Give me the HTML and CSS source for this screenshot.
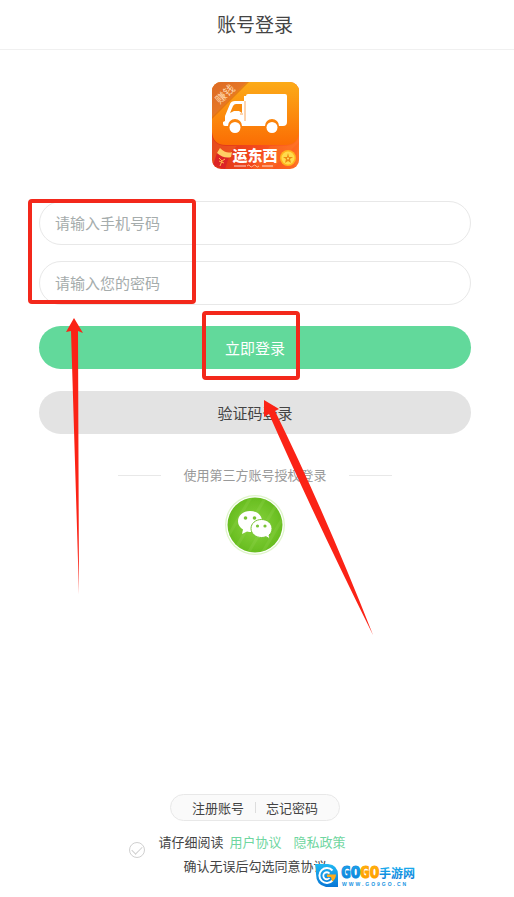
FILE: index.html
```html
<!DOCTYPE html>
<html lang="zh-CN">
<head>
<meta charset="utf-8">
<meta name="viewport" content="width=device-width, initial-scale=1">
<title>账号登录</title>
<link rel="stylesheet" href="styles.css">
</head>
<body>
<div class="page">
  <header class="topbar"><h1>账号登录</h1></header>

  <main class="content">
    <svg class="logo" viewBox="0 0 87 87" role="img" aria-label="运东西">
      <defs>
        <linearGradient id="sky" x1="0" y1="0" x2="0" y2="1">
          <stop offset="0" stop-color="#fcab18"/><stop offset="1" stop-color="#fb6d04"/>
        </linearGradient>
        <linearGradient id="ribbon" x1="0" y1="0" x2="1" y2="1">
          <stop offset="0" stop-color="#dc6a25"/><stop offset="1" stop-color="#ef8327"/>
        </linearGradient>
        <linearGradient id="base" x1="0" y1="0" x2="1" y2="0">
          <stop offset="0" stop-color="#dc3418"/><stop offset=".5" stop-color="#f4481c"/><stop offset="1" stop-color="#ff6d21"/>
        </linearGradient>
        <clipPath id="tile"><rect width="87" height="87" rx="9"/></clipPath>
      </defs>
      <g clip-path="url(#tile)">
        <rect width="87" height="87" fill="url(#base)"/>
        <path d="M0 53Q2 64 15 64H72Q85 64 87 53V87H82L87 60 60 87H40L58 64H25L0 87Z" fill="#ff8a2b" opacity=".28"/>
        <path d="M0 0H87V50Q86 63 73 63H14Q1 63 0 50Z" fill="url(#sky)"/>
        <path d="M0 0H35L0 35Z" fill="url(#ribbon)"/>
        <path d="M35 0L0 35V37L37 0Z" fill="#c95413" opacity=".45"/>
        <path d="M34 14Q34 12 36 12H73Q75 12 75 14V40Q75 44 71 44H67A7 7 0 0 0 53 44H30A7 7 0 0 0 16 44H13Q11 44 11 42V40L13 39V34L18 22Q19 19 23 19H32V14Z" fill="#fff"/>
        <path d="M18 31L21 24Q22 22 24 22H30V31L27 29H22Z" fill="#f98a0b"/>
        <path d="M33 19V39M31 32H28" fill="none" stroke="#fca75a"/>
        <circle cx="23" cy="45.500" r="5.500" fill="#fff"/>
        <circle cx="60" cy="45.500" r="5.500" fill="#fff"/>
        <path d="M5 71L17 75 13 87 1 83Z" fill="#dc2426"/>
        <path d="M8 66Q14 72 20 70L19 75Q12 77 5 71Z" fill="#ffce65"/>
        <path d="M7 76L10 79 13 77M10 79L8 84M7 79L12 81" fill="none" stroke="#ffb44b"/>
        <path d="M22 84H34M50 84H61" stroke="#fff" stroke-width=".8"/>
        <path d="M35 84Q37 82 38 84T41 84T44 84T47 84" fill="none" stroke="#ffd6b5" stroke-width=".8"/>
        <circle cx="76" cy="76" r="8" fill="#ffb51d"/>
        <circle cx="76" cy="76" r="6.500" fill="#ffdc4d"/>
        <path d="M76 71L77 75 81 75 78 77 79 81 76 79 73 81 74 77 71 75 75 75Z" fill="#ed8a10"/>
        <circle cx="76" cy="76.500" r="1" fill="#ffe36a"/>
      </g>
      <text class="logo-tag" x="13" y="16" transform="rotate(-43 13 12)">赚钱</text>
      <text class="logo-name" x="43" y="79">运东西</text>
    </svg>

    <form class="login">
      <input class="field" id="phone" type="tel" placeholder="请输入手机号码" aria-label="手机号码">
      <input class="field" id="password" type="password" placeholder="请输入您的密码" aria-label="密码">
      <button class="btn btn-primary" type="submit">立即登录</button>
      <button class="btn btn-plain" type="button">验证码登录</button>
    </form>

    <p class="divider"><span>使用第三方账号授权登录</span></p>

    <button class="wechat" type="button" aria-label="微信登录">
      <svg viewBox="0 0 60 60">
        <defs>
          <radialGradient id="leaf"><stop offset="0" stop-color="#8ad440"/><stop offset="1" stop-color="#68bd20"/></radialGradient>
          <clipPath id="disc"><circle cx="30" cy="30" r="27.500"/></clipPath>
        </defs>
        <circle cx="30" cy="30" r="30" fill="#dff5cb"/>
        <circle cx="30" cy="30" r="28.700" fill="#fff"/>
        <circle cx="30" cy="30" r="27.500" fill="url(#leaf)"/>
        <g clip-path="url(#disc)" stroke="#a1dc5f" stroke-width="3" opacity=".2">
          <path d="M-2 50L26 2M8 58L42 0M22 60L56 2M36 60L62 16"/>
        </g>
        <path d="M25 16C18 16 13 20.500 13 26.500C13 30 15 32.500 18 34.500L17 39L22 36.500Q24 37 27 37L37 26C37 20 32 16 25 16Z" fill="#fff"/>
        <path d="M36.500 24.500C30.500 24.500 26 28.500 26 33.500S30.500 42.500 36.500 42.500Q39 42.500 41 41.700L45 44L44 40C46 38.500 47 36 47 33.500C47 28.500 42.500 24.500 36.500 24.500Z" fill="#fff" stroke="#77c332"/>
        <g fill="#79c435"><circle cx="20.500" cy="23" r="1.800"/><circle cx="29.500" cy="23" r="1.800"/><circle cx="32.500" cy="31" r="1.600"/><circle cx="40" cy="31" r="1.600"/></g>
      </svg>
    </button>
  </main>

  <footer class="foot">
    <nav class="pill">
      <a href="#register">注册账号</a>
      <a href="#forgot">忘记密码</a>
    </nav>
    <div class="terms">
      <input class="tick" id="agree" type="checkbox" aria-label="同意协议">
      <p>请仔细阅读<a href="#user">用户协议</a><a href="#privacy">隐私政策</a><br><label for="agree">确认无误后勾选同意协议</label></p>
    </div>
  </footer>

  <svg class="marks" width="514" height="897" viewBox="0 0 514 897" aria-hidden="true">
    <g fill="none" stroke="#f3281b" stroke-width="4">
      <rect x="30" y="201" width="164" height="101" rx="2"/>
      <rect x="204" y="313" width="94" height="65" rx="2"/>
    </g>
    <g fill="#fb2316">
      <path d="M74 318L83 333L78 331L79 594L71 331L66 332Z"/>
      <path d="M264 400L279 409L275 411Q326 515 373 635Q314 516 269 414L264 417Z"/>
    </g>
  </svg>

  <svg class="watermark" width="100" height="28" viewBox="0 0 100 28" role="img" aria-label="GOGO手游网">
    <defs>
      <linearGradient id="blue" x1="0" y1="0" x2="0" y2="1"><stop offset="0" stop-color="#20b8f3"/><stop offset="1" stop-color="#0876d5"/></linearGradient>
      <linearGradient id="gold" x1="0" y1="0" x2="0" y2="1"><stop offset="0" stop-color="#ffbd10"/><stop offset="1" stop-color="#ff9400"/></linearGradient>
    </defs>
    <path d="M0 3H13Q23 4 23 14V26H11Q1 24 1 13Q1 7 0 3Z" fill="url(#blue)"/>
    <path d="M17.500 9.500A7.500 7.500 0 1 0 17.500 19.500" fill="none" stroke="#fff" stroke-width="2"/>
    <path d="M14.500 12.500A3.500 3.500 0 1 0 14.500 17" fill="none" stroke="#fff" stroke-width="1.800"/>
    <path d="M12 13.500H21Q20.500 19 17 20.500L16 16H12Z" fill="#ffab18"/>
    <text class="wm-go" x="26" y="17" fill="url(#blue)" stroke="#0d8ce0">GO</text>
    <text class="wm-go" x="45" y="17" fill="url(#gold)" stroke="#ffa400">GO</text>
    <text class="wm-cn" x="64" y="17" fill="url(#blue)">手游网</text>
    <text class="wm-url" x="27" y="25">WWW.GO9GO.CN</text>
  </svg>
</div>
</body>
</html>
```
FILE: styles.css
```css
* { box-sizing: border-box; }

body {
  margin: 0;
  background: #fff;
  color: #444;
  font-family: "Noto Sans CJK SC", sans-serif;
  font-size: 13px;
}

h1, p { margin: 0; font-weight: 400; }
a { color: inherit; text-decoration: none; }
button, input { font: inherit; }

.page {
  position: relative;
  display: flex;
  flex-direction: column;
  min-height: 100vh;
}

.topbar {
  padding: 9px 4px 10px 0;
  border-bottom: 1px solid #f0f0f0;
  text-align: center;
}

.topbar h1 {
  font-size: 19px;
  line-height: 30px;
}

.content {
  display: flex;
  flex-direction: column;
  align-items: center;
  padding: 32px 43px 24px 39px;
}

.logo {
  display: block;
  width: 87px;
  height: 87px;
}

.logo-tag {
  fill: #ffd9ae;
  font-size: 11px;
  text-anchor: middle;
}

.logo-name {
  fill: #fff;
  font-size: 15px;
  font-weight: 900;
  text-anchor: middle;
}

.login {
  display: flex;
  flex-direction: column;
  width: 100%;
  margin-top: 32px;
}

.field {
  width: 100%;
  height: 44px;
  margin-bottom: 16px;
  padding: 0 15px 2px;
  border: 1px solid #e8e8e8;
  border-radius: 22px;
  background: #fff;
  color: #444;
  font-size: 15px;
}

.field::placeholder { color: #a5acac; opacity: 1; }

.btn {
  height: 43px;
  padding: 0 0 1px;
  border: 0;
  border-radius: 22px;
  font-size: 15px;
}

.btn-primary {
  margin: 5px 0 22px;
  background: #62d99b;
  color: #fff;
}

.btn-plain {
  background: #e3e3e3;
  color: #444;
}

.divider {
  display: flex;
  align-items: center;
  gap: 22px;
  margin-top: 31px;
  color: #999;
  line-height: 20px;
}

.divider::before,
.divider::after {
  content: "";
  width: 43px;
  height: 1px;
  background: #e8e8e8;
}

.wechat {
  width: 60px;
  height: 60px;
  margin-top: 10px;
  padding: 0;
  border: 0;
  background: none;
}

.wechat svg { display: block; }

.foot {
  margin-top: auto;
  padding: 0 4px 19px 0;
}

.pill {
  display: flex;
  width: fit-content;
  margin: 0 auto 9px;
  padding: 0 10px;
  border: 1px solid #e8e8e8;
  border-radius: 14px;
  background: #fafafa;
  line-height: 25px;
}

.pill a {
  display: flex;
  align-items: center;
  padding: 0 11px;
}

.pill a + a::before {
  content: "";
  width: 1px;
  height: 11px;
  margin: 0 10px 0 -11px;
  background: #ddd;
}

.terms {
  display: grid;
  grid-template-columns: 1fr auto 1fr;
  align-items: start;
  column-gap: 13px;
  line-height: 24px;
  text-align: center;
}

.terms a {
  margin: 0 6px;
  color: #6fd6a0;
}

.tick {
  display: grid;
  place-items: center;
  justify-self: end;
  width: 16px;
  height: 16px;
  margin: 12px 0 0;
  border: 1px solid #d0d0d0;
  border-radius: 50%;
  background: #fff;
  appearance: none;
}

.tick::before {
  content: "";
  width: 9px;
  height: 5px;
  margin-bottom: 2px;
  border: solid #d0d0d0;
  border-width: 0 0 1px 1px;
  transform: rotate(-45deg);
}

.marks {
  position: absolute;
  top: 0;
  left: 0;
  pointer-events: none;
}

.watermark {
  position: absolute;
  left: 315px;
  bottom: 8px;
  pointer-events: none;
}

.wm-go {
  font-family: "DejaVu Sans Mono", monospace;
  font-size: 16px;
  font-weight: 700;
}

.wm-cn {
  font-size: 12px;
  font-weight: 700;
}

.wm-url {
  fill: #1693e2;
  font-family: "Liberation Sans", sans-serif;
  font-size: 5px;
  font-weight: 700;
  letter-spacing: 2px;
}
```
